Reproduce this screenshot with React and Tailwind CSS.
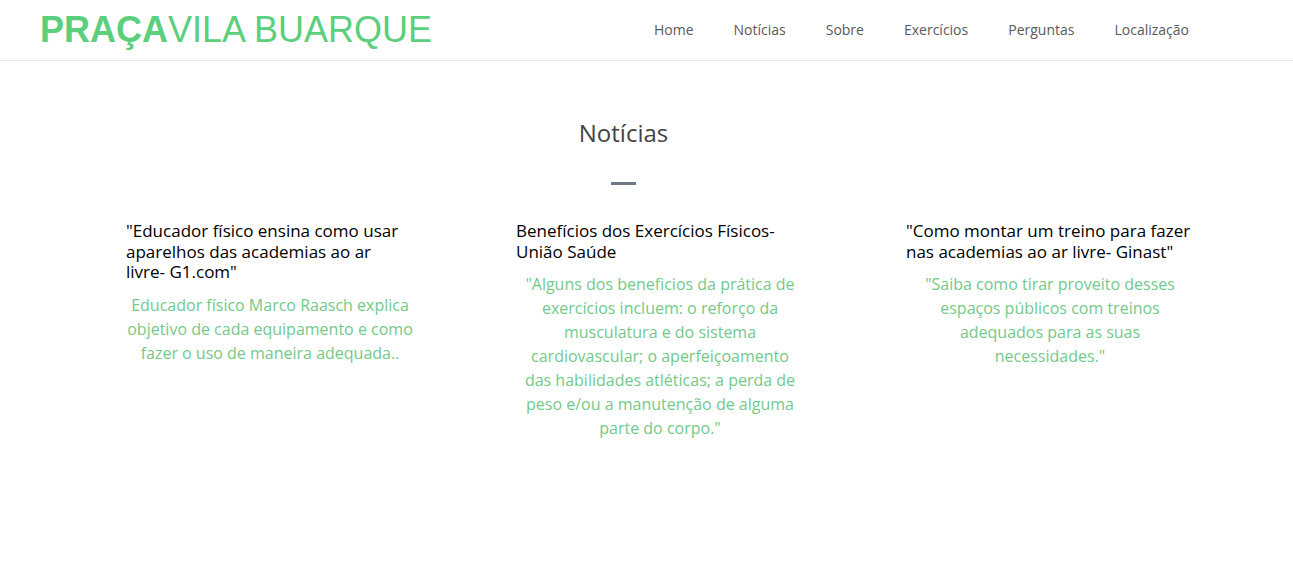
import React from "react";

const cards = [
  {
    title: "\"Educador físico ensina como usar aparelhos das academias ao ar livre- G1.com\"",
    body: "Educador físico Marco Raasch explica objetivo de cada equipamento e como fazer o uso de maneira adequada..",
  },
  {
    title: "Benefícios dos Exercícios Físicos- União Saúde",
    body: "\"Alguns dos beneficios da prática de exercícios incluem: o reforço da musculatura e do sistema cardiovascular; o aperfeiçoamento das habilidades atléticas; a perda de peso e/ou a manutenção de alguma parte do corpo.\"",
  },
  {
    title: "\"Como montar um treino para fazer nas academias ao ar livre- Ginast\"",
    body: "\"Saiba como tirar proveito desses espaços públicos com treinos adequados para as suas necessidades.\"",
  },
];

const nav = ["Home", "Notícias", "Sobre", "Exercícios", "Perguntas", "Localização"];

export default function App() {
  return (
    <div className="w-[1293px] min-h-[575px] bg-white" style={{ fontFamily: "'Open Sans', sans-serif" }}>
      <header className="h-[61px] border-b border-[#e7e7e7] flex items-center justify-between pl-[40px] pr-[104px]">
        <div
          className="text-[36px] leading-none text-[#5ccf7c] whitespace-nowrap"
          style={{ fontFamily: "'Liberation Sans', Arial, sans-serif" }}
        >
          <span className="font-bold">PRAÇA</span>
          <span>VILA BUARQUE</span>
        </div>
        <nav className="flex gap-[40px] text-[14px] leading-[20px] text-[#5a5a5a] font-medium">
          {nav.map((n) => (
            <span key={n}>{n}</span>
          ))}
        </nav>
      </header>
      <main>
        <div className="w-[1247px] flex flex-col items-center pt-[58px]">
          <h2 className="text-[24px] leading-[28px] text-[#444444] font-medium">Notícias</h2>
          <div className="mt-[35px] w-[25px] h-[3px] bg-[#6c7a89]" />
        </div>
        <div className="grid grid-cols-3 w-[1170px] ml-[75px] mt-[36px]">
          {cards.map((c, i) => (
            <div key={i} className="px-[51px]">
              <h3 className="text-[17px] leading-[20.5px] text-black font-medium">{c.title}</h3>
              <p className="mt-[10px] text-[16px] leading-[24px] text-center text-[#74c98a]">{c.body}</p>
            </div>
          ))}
        </div>
      </main>
    </div>
  );
}
